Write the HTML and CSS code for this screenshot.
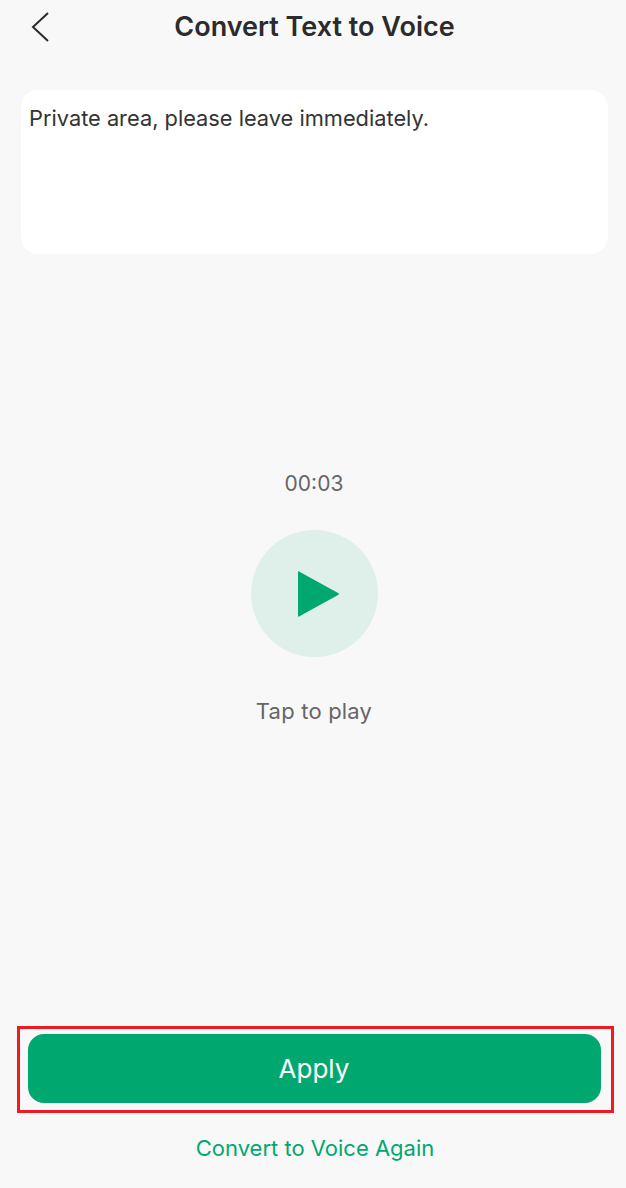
FILE: index.html
```html
<!DOCTYPE html>
<html lang="en">
<head>
    <meta charset="UTF-8">
    <meta name="viewport" content="width=device-width, initial-scale=1.0">
    <title>Convert Text to Voice</title>
    <link rel="stylesheet" href="styles.css">
</head>
<body>

<main class="page">
    <header class="topbar">
        <svg class="back-icon" viewBox="0 0 20 32" width="20" height="32" aria-hidden="true">
            <path d="M18 2 L3 16 L18 30" fill="none" stroke="#2b2b2b" stroke-width="2"/>
        </svg>
        <h1 class="title">Convert Text to Voice</h1>
    </header>

    <section class="text-card">Private area, please leave immediately.</section>

    <section class="player">
        <div class="time">00:03</div>
        <button class="play-btn" type="button" aria-label="Play">
            <svg viewBox="0 0 42 48" width="42" height="48" aria-hidden="true">
                <path d="M1 1.5 L40.5 23.2 Q41.5 24 40.5 24.8 L1 46.5 Q0 47 0 46 L0 2 Q0 1 1 1.5 Z" fill="#00a870"/>
            </svg>
        </button>
        <div class="hint">Tap to play</div>
    </section>

    <footer class="actions">
        <div class="apply-frame">
            <button class="apply-btn" type="button">Apply</button>
        </div>
        <a class="again-link" href="#">Convert to Voice Again</a>
    </footer>
</main>

</body>
</html>
```

FILE: styles.css
```css
/* page */
body {
  margin: 0;
  background-color: #f8f8f8;
  font-family: Inter, "Noto Sans", sans-serif;
  color: #2b2b2b;
}

.page {
  height: 1188px;
  display: flex;
  flex-direction: column;
  overflow: hidden;
}

/* top bar */
.topbar {
  position: relative;
  height: 52px;
  padding-left: 3px;
  display: flex;
  justify-content: center;
  align-items: center;
}

.back-icon {
  position: absolute;
  left: 30px;
  top: 11px;
}

.title {
  margin: 0;
  font-size: 27px;
  font-weight: 600;
  color: #2b2b2b;
}

/* text box */
.text-card {
  height: 164px;
  margin: 38px 18px 0 21px;
  padding: 14px 8px;
  box-sizing: border-box;
  background-color: #fff;
  border-radius: 17px;
  font-size: 21.8px;
  line-height: 28px;
  color: #333;
}

/* player */
.player {
  margin-top: 216px;
  padding-left: 2px;
  display: flex;
  flex-direction: column;
  align-items: center;
}

.time {
  font-size: 21px;
  line-height: 28px;
  color: #666;
}

.play-btn {
  width: 127px;
  height: 127px;
  margin-top: 32px;
  padding: 0 0 0 10px;
  border: none;
  border-radius: 50%;
  background-color: #dff0ea;
  display: flex;
  justify-content: center;
  align-items: center;
}

.hint {
  margin-top: 40px;
  font-size: 22px;
  line-height: 28px;
  letter-spacing: 0.2px;
  color: #666;
}

/* bottom */
.actions {
  margin-top: auto;
  padding: 0 0 26px 4px;
  display: flex;
  flex-direction: column;
  align-items: center;
}

.apply-frame {
  width: 597px;
  height: 87px;
  box-sizing: border-box;
  padding: 5px 10px 7px 8px;
  border: 3px solid #ed1c24;
}

.apply-btn {
  width: 100%;
  height: 100%;
  border: none;
  border-radius: 16px;
  background-color: #00a870;
  color: #fff;
  font-family: inherit;
  font-size: 26px;
}

.again-link {
  margin-top: 21px;
  font-size: 22px;
  line-height: 28px;
  color: #00a870;
  text-decoration: none;
}
```
